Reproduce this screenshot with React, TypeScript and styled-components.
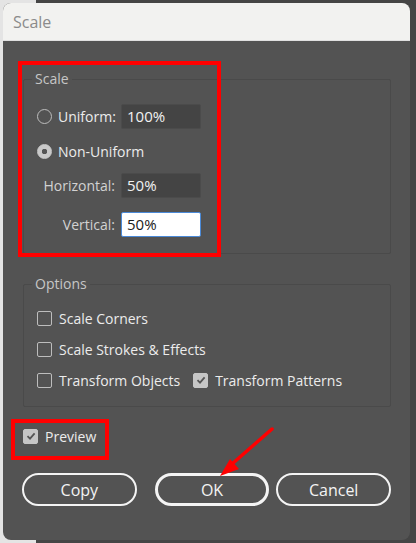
import styled, { createGlobalStyle } from 'styled-components';

const GlobalStyle = createGlobalStyle`
  html, body {
    margin: 0;
    padding: 0;
  }
  body {
    width: 416px;
    height: 543px;
    overflow: hidden;
    background: linear-gradient(to right, #e4e4e4 0 36px, #454545 36px 100%);
    font-family: 'Segoe UI', 'Open Sans', sans-serif;
  }
`;

const Window = styled.div`
  position: relative;
  margin: 3px 0 0 3px;
  width: 407px;
  height: 537px;
  border-radius: 8px;
  overflow: hidden;
  background: #535353;
  display: flex;
  flex-direction: column;
`;

const TitleBar = styled.div`
  height: 38px;
  flex: none;
  display: flex;
  align-items: center;
  padding-left: 10px;
  background: #f2f2f0;
  color: #8b8b8b;
  font-size: 16px;
  border-bottom: 1px solid #e0e0e0;
  box-sizing: border-box;
`;

const Body = styled.div`
  flex: 1;
  display: flex;
  flex-direction: column;
  padding: 30px 19px 0 20px;
  color: #ececec;
  font-size: 14px;
`;

const Group = styled.fieldset<{ $top?: number }>`
  margin: ${(p) => p.$top ?? 0}px 0 0 0;
  padding: 16px 0 16px 13px;
  border: 1px solid #4a4a4a;
  border-radius: 2px;
  min-width: 0;
  display: flex;
  flex-direction: column;
`;

const Legend = styled.legend`
  margin-left: -5px;
  padding: 0 3px;
  color: #c6c6c6;
  font-size: 14px;
  line-height: 16px;
`;

const FieldRow = styled.div<{ $gap?: number }>`
  display: flex;
  align-items: center;
  height: 26px;
  margin-top: ${(p) => p.$gap ?? 0}px;
`;

const LabelCell = styled.div<{ $right?: boolean }>`
  width: 78px;
  display: flex;
  align-items: center;
  justify-content: ${(p) => (p.$right ? 'flex-end' : 'flex-start')};
  gap: 6px;
  white-space: nowrap;
  color: ${(p) => (p.$right ? '#d2d2d2' : '#ececec')};
`;

const RadioLabel = styled.div`
  display: flex;
  align-items: center;
  gap: 6px;
  white-space: nowrap;
`;

const Radio = styled.span<{ $checked?: boolean }>`
  width: 15px;
  height: 15px;
  border-radius: 50%;
  box-sizing: border-box;
  flex: none;
  border: 1.5px solid #bdbdbd;
  background: ${(p) =>
    p.$checked ? 'radial-gradient(circle, #555 0 2.5px, #c9c9c9 3px)' : 'transparent'};
  border-color: ${(p) => (p.$checked ? '#c9c9c9' : '#bdbdbd')};
`;

const Input = styled.div<{ $focus?: boolean }>`
  margin-left: 6px;
  width: 80px;
  height: 25px;
  box-sizing: border-box;
  display: flex;
  align-items: center;
  padding-left: 5px;
  font-size: 15px;
  border-radius: 2px;
  background: ${(p) => (p.$focus ? '#ffffff' : '#444444')};
  color: ${(p) => (p.$focus ? '#1a1a1a' : '#f2f2f2')};
  border: 1px solid ${(p) => (p.$focus ? '#4b8ad8' : '#4b4b4b')};
`;

const CheckRow = styled.div<{ $gap?: number }>`
  display: flex;
  align-items: center;
  height: 20px;
  margin-top: ${(p) => p.$gap ?? 0}px;
`;

const Check = styled.label<{ $space?: number }>`
  display: flex;
  align-items: center;
  gap: 7px;
  white-space: nowrap;
  margin-right: ${(p) => p.$space ?? 0}px;
`;

const Box = styled.span<{ $checked?: boolean }>`
  width: 15px;
  height: 15px;
  box-sizing: border-box;
  border-radius: 2px;
  flex: none;
  display: flex;
  align-items: center;
  justify-content: center;
  border: 1px solid ${(p) => (p.$checked ? '#c6c6c6' : '#bdbdbd')};
  background: ${(p) => (p.$checked ? '#c6c6c6' : 'transparent')};
`;

const PreviewRow = styled.div`
  display: flex;
  align-items: center;
  height: 20px;
  margin-top: 19px;
`;

const ButtonRow = styled.div`
  display: flex;
  margin-top: 27px;
  margin-left: -1px;
`;

const Button = styled.button<{ $primary?: boolean; $space?: number }>`
  width: 115px;
  height: 33px;
  margin-right: ${(p) => p.$space ?? 0}px;
  border-radius: 17px;
  box-sizing: border-box;
  background: transparent;
  border: ${(p) => (p.$primary ? 3 : 2)}px solid #f4f4f4;
  color: #f4f4f4;
  font-family: 'Segoe UI', 'Open Sans', sans-serif;
  font-size: 16px;
  padding: 0;
`;

const Highlight = styled.div<{ $x: number; $y: number; $w: number; $h: number }>`
  position: absolute;
  left: ${(p) => p.$x}px;
  top: ${(p) => p.$y}px;
  width: ${(p) => p.$w}px;
  height: ${(p) => p.$h}px;
  box-sizing: border-box;
  border: 4px solid #ff0000;
  pointer-events: none;
`;

const ArrowLayer = styled.svg`
  position: absolute;
  left: 0;
  top: 0;
  pointer-events: none;
`;

function CheckMark() {
  return (
    <svg width="10" height="10" viewBox="0 0 10 10">
      <path d="M1.5 5.2 L4 7.6 L8.6 2.4" fill="none" stroke="#555" strokeWidth="1.8" />
    </svg>
  );
}

function CheckBox({ label, checked, space }: { label: string; checked?: boolean; space?: number }) {
  return (
    <Check $space={space}>
      <Box $checked={checked}>{checked && <CheckMark />}</Box>
      {label}
    </Check>
  );
}

export default function App() {
  return (
    <>
      <GlobalStyle />
      <Window>
        <TitleBar>Scale</TitleBar>
        <Body>
          <Group>
            <Legend>Scale</Legend>
            <FieldRow>
              <LabelCell>
                <Radio />
                Uniform:
              </LabelCell>
              <Input>100%</Input>
            </FieldRow>
            <FieldRow $gap={9}>
              <RadioLabel>
                <Radio $checked />
                Non-Uniform
              </RadioLabel>
            </FieldRow>
            <FieldRow $gap={8}>
              <LabelCell $right>Horizontal:</LabelCell>
              <Input>50%</Input>
            </FieldRow>
            <FieldRow $gap={13}>
              <LabelCell $right>Vertical:</LabelCell>
              <Input $focus>50%</Input>
            </FieldRow>
          </Group>

          <Group $top={22}>
            <Legend>Options</Legend>
            <CheckRow>
              <CheckBox label="Scale Corners" />
            </CheckRow>
            <CheckRow $gap={11}>
              <CheckBox label="Scale Strokes & Effects" />
            </CheckRow>
            <CheckRow $gap={11}>
              <CheckBox label="Transform Objects" space={13} />
              <CheckBox label="Transform Patterns" checked />
            </CheckRow>
          </Group>

          <PreviewRow>
            <CheckBox label="Preview" checked />
          </PreviewRow>

          <ButtonRow>
            <Button $space={18}>Copy</Button>
            <Button $primary $space={7}>OK</Button>
            <Button>Cancel</Button>
          </ButtonRow>
        </Body>

        <Highlight $x={15} $y={58} $w={203} $h={196} />
        <Highlight $x={8} $y={416} $w={98} $h={41} />
        <ArrowLayer width="407" height="537" viewBox="0 0 407 537">
          <line x1="269" y1="426" x2="229" y2="461" stroke="#ff0000" strokeWidth="3.5" strokeLinecap="round" />
          <polygon points="217,473 227,456 236,466" fill="#ff0000" />
        </ArrowLayer>
      </Window>
    </>
  );
}
